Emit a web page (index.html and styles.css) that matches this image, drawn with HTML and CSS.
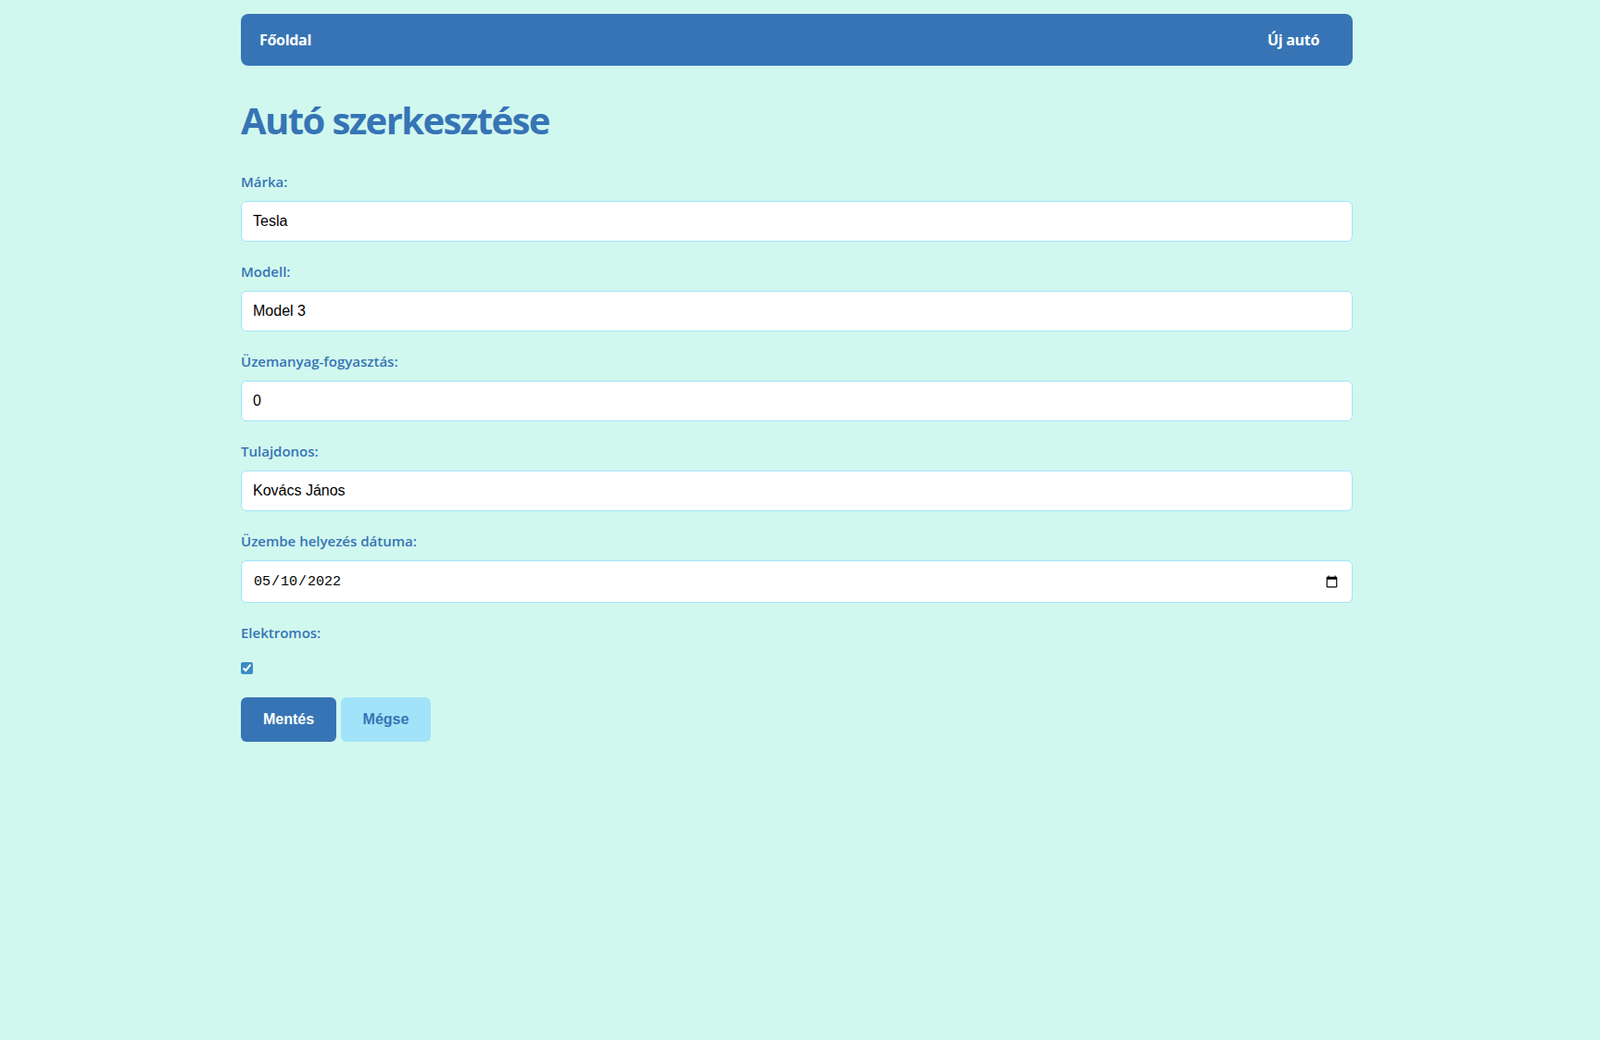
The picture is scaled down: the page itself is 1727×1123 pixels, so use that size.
FILE: index.html
```html
<!DOCTYPE html>
<html lang="hu">
<head>
<meta charset="utf-8">
<title>Autó szerkesztése</title>
<link rel="stylesheet" href="styles.css">
</head>
<body>
<div class="container">
  <nav class="navbar">
    <a class="nav-link" href="#">Főoldal</a>
    <a class="nav-link" href="#">Új autó</a>
  </nav>
  <h1 class="title">Autó szerkesztése</h1>
  <form class="form">
    <div class="field">
      <label class="label" for="marka">Márka:</label>
      <input class="input" id="marka" type="text" value="Tesla">
    </div>
    <div class="field">
      <label class="label" for="modell">Modell:</label>
      <input class="input" id="modell" type="text" value="Model 3">
    </div>
    <div class="field">
      <label class="label" for="fogy">Üzemanyag-fogyasztás:</label>
      <input class="input" id="fogy" type="number" value="0">
    </div>
    <div class="field">
      <label class="label" for="tulaj">Tulajdonos:</label>
      <input class="input" id="tulaj" type="text" value="Kovács János">
    </div>
    <div class="field">
      <label class="label" for="datum">Üzembe helyezés dátuma:</label>
      <input class="input input-date" id="datum" type="date" value="2022-05-10">
    </div>
    <div class="field field-check">
      <label class="label" for="elektromos">Elektromos:</label>
      <input class="checkbox" id="elektromos" type="checkbox" checked>
    </div>
    <div class="actions">
      <button class="btn btn-primary" type="button">Mentés</button>
      <button class="btn btn-secondary" type="button">Mégse</button>
    </div>
  </form>
</div>
</body>
</html>
```
FILE: styles.css
```css
html, body {
  margin: 0;
  padding: 0;
}
body {
  background: #D1F8EF;
  font-family: "Open Sans", "Noto Sans", sans-serif;
  padding-right: 7px;
  min-height: 1123px;
  box-sizing: border-box;
}
.container {
  width: 1200px;
  margin: 0 auto;
  padding-top: 15px;
}
.navbar {
  height: 56px;
  box-sizing: border-box;
  background: #3674B5;
  border-radius: 8px;
  padding: 0 36px 0 20px;
  display: flex;
  align-items: center;
  justify-content: space-between;
}
.nav-link {
  color: #ffffff;
  text-decoration: none;
  font-weight: 700;
  font-size: 16px;
  letter-spacing: -0.3px;
}
.title {
  color: #3674B5;
  font-size: 40px;
  font-weight: 700;
  line-height: 48px;
  letter-spacing: -1.6px;
  margin: 35px 0 32px;
}
.field {
  margin-bottom: 22px;
}
.field-check {
  margin-bottom: 25px;
}
.label {
  display: block;
  color: #3674B5;
  font-size: 15px;
  font-weight: 600;
  line-height: 20px;
  margin-bottom: 11px;
}
.input {
  display: block;
  width: 100%;
  box-sizing: border-box;
  height: 44px;
  padding: 0 12px;
  border: 1px solid #A1E3F9;
  border-radius: 6px;
  background: #ffffff;
  font-family: "Liberation Sans", Arial, sans-serif;
  font-size: 16px;
  color: #000000;
  outline: none;
}
.input-date {
  height: 46px;
  font-family: "Liberation Mono", monospace;
  font-size: 15px;
}
.checkbox {
  display: block;
  width: 13px;
  height: 13px;
  margin: 22px 0 0 0;
  accent-color: #3B8CC4;
}
.actions {
  display: flex;
  gap: 5px;
}
.btn {
  height: 48px;
  padding: 0 22px;
  border: none;
  border-radius: 6px;
  font-family: "Liberation Sans", Arial, sans-serif;
  font-size: 16px;
  font-weight: 700;
  cursor: pointer;
}
.btn-primary {
  background: #3674B5;
  color: #ffffff;
  width: 103px;
}
.btn-secondary {
  background: #A1E3F9;
  color: #3674B5;
  width: 97px;
}
```
